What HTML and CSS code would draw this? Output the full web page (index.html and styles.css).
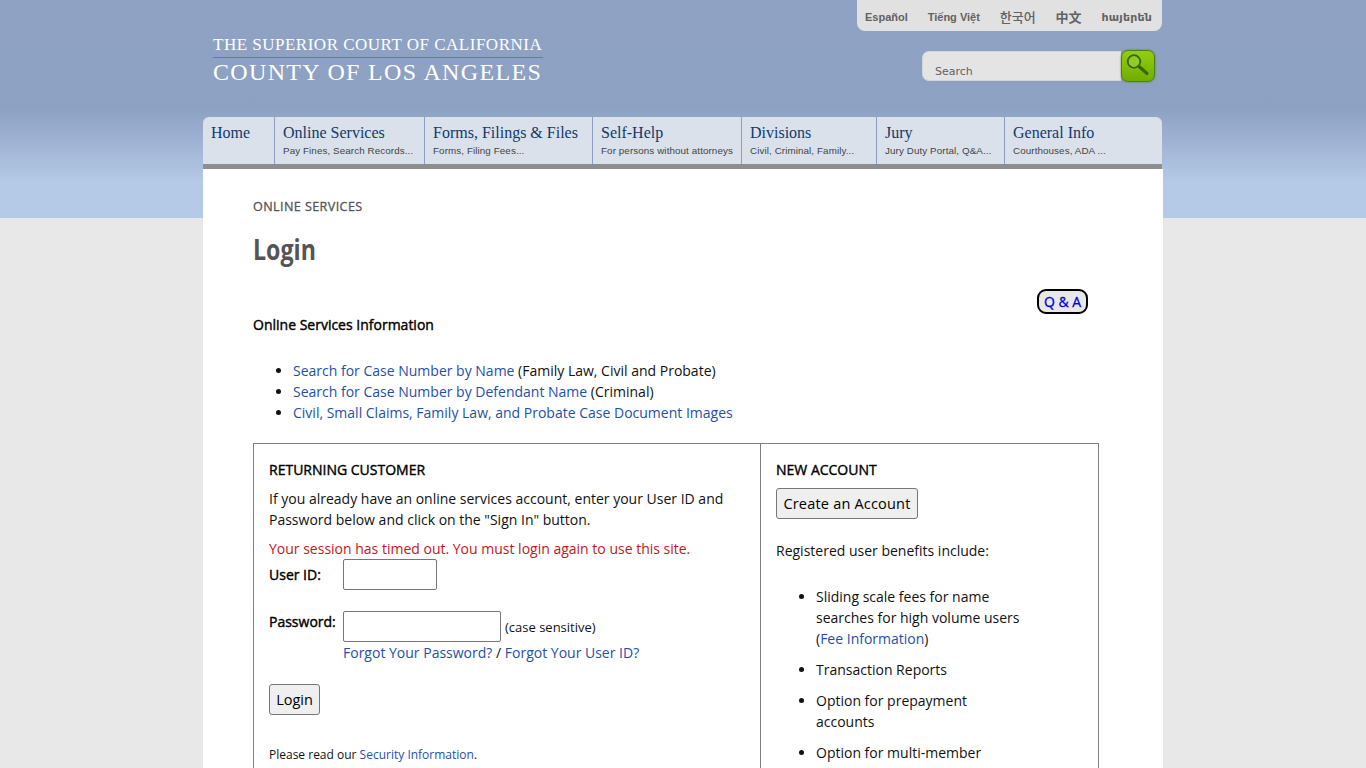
FILE: index.html
```html
<!DOCTYPE html>
<html lang="en">
<head>
  <meta charset="utf-8">
  <title>Online Services - Login</title>
  <link rel="stylesheet" href="styles.css">
</head>
<body>
  <div class="wrapper">
    <header class="header">
      <a class="logo" href="#">
        <span class="logo-top">THE SUPERIOR COURT OF CALIFORNIA</span>
        <span class="logo-bottom">COUNTY OF LOS ANGELES</span>
      </a>
      <div class="header-right">
        <div class="languages">
          <a class="lang-es" href="#">Español</a>
          <a class="lang-vi" href="#">Tiếng Việt</a>
          <a class="lang-ko" href="#">한국어</a>
          <a class="lang-zh" href="#">中文</a>
          <a class="lang-hy" href="#">հայերեն</a>
        </div>
        <form class="search">
          <input class="search-input" type="text" placeholder="Search">
          <button class="search-button" type="button" aria-label="Search">
            <svg width="34" height="32" viewBox="0 0 34 32">
              <path d="M18 16.5L26 23.5" stroke="#376500" stroke-width="3" stroke-linecap="round"/>
              <circle cx="13" cy="11.5" r="6.3" fill="#91cb27" stroke="#376500" stroke-width="1.8"/>
            </svg>
          </button>
        </form>
      </div>
    </header>

    <nav class="nav">
      <a class="nav-home" href="#"><b>Home</b></a>
      <a class="nav-online" href="#"><b>Online Services</b><span>Pay Fines, Search Records...</span></a>
      <a class="nav-forms" href="#"><b>Forms, Filings &amp; Files</b><span>Forms, Filing Fees...</span></a>
      <a class="nav-self" href="#"><b>Self-Help</b><span>For persons without attorneys</span></a>
      <a class="nav-divisions" href="#"><b>Divisions</b><span>Civil, Criminal, Family...</span></a>
      <a class="nav-jury" href="#"><b>Jury</b><span>Jury Duty Portal, Q&amp;A...</span></a>
      <a class="nav-info" href="#"><b>General Info</b><span>Courthouses, ADA ...</span></a>
    </nav>

    <main class="content">
      <div class="section-name">ONLINE SERVICES</div>
      <h1><span>Login</span></h1>
      <div class="qa"><a href="#">Q &amp; A</a></div>
      <h2 class="info-title">Online Services Information</h2>
      <ul class="links">
        <li><a href="#">Search for Case Number by Name</a> (Family Law, Civil and Probate)</li>
        <li><a href="#">Search for Case Number by Defendant Name</a> (Criminal)</li>
        <li><a href="#">Civil, Small Claims, Family Law, and Probate Case Document Images</a></li>
      </ul>

      <div class="accounts">
        <form class="returning">
          <h2>RETURNING CUSTOMER</h2>
          <p class="intro">If you already have an online services account, enter your User ID and Password below and click on the "Sign In" button.</p>
          <p class="error">Your session has timed out. You must login again to use this site.</p>
          <div class="field">
            <label for="user-id">User ID:</label>
            <input class="user-id" type="text" id="user-id">
          </div>
          <div class="field">
            <label for="password">Password:</label>
            <input class="password" type="password" id="password">
            <span class="small">(case sensitive)</span>
          </div>
          <div class="forgot"><a href="#">Forgot Your Password?</a> / <a href="#">Forgot Your User ID?</a></div>
          <button class="button login-button" type="button">Login</button>
          <p class="security">Please read our <a href="#">Security Information</a>.</p>
        </form>

        <div class="new-account">
          <h2>NEW ACCOUNT</h2>
          <button class="button create-button" type="button">Create an Account</button>
          <p class="benefits-title">Registered user benefits include:</p>
          <ul class="benefits">
            <li>Sliding scale fees for name searches for high volume users (<a href="#">Fee Information</a>)</li>
            <li>Transaction Reports</li>
            <li>Option for prepayment accounts</li>
            <li>Option for multi-member accounts</li>
          </ul>
        </div>
      </div>
    </main>
  </div>
</body>
</html>
```

FILE: styles.css
```css
* {
  box-sizing: border-box;
}

html {
  background: #e8e8e8;
}

body {
  height: 768px;
  margin: 0;
  overflow: hidden;
  background: #e8e8e8 linear-gradient(#8fa2c4 0, #8da1c3 108px, #a1b4d5 145px, #b5cae6 182px, #b5cae6 217px, #b5cae6 218px) no-repeat 0 0 / 100% 218px;
  color: #111;
  font-family: "Open Sans", sans-serif;
  font-size: 14px;
  line-height: 21px;
}

a {
  color: #1f4fa8;
  text-decoration: none;
}

h1, h2, p, ul {
  margin: 0;
}

h2, label {
  color: #000;
  font-size: 14px;
  font-weight: 400;
  -webkit-text-stroke: 0.4px #000;
}

input, button {
  font-family: "Open Sans", sans-serif;
}

.wrapper {
  width: 960px;
  margin: 0 auto;
}

/* header */
.header {
  display: flex;
  justify-content: space-between;
  height: 117px;
}

.logo {
  display: flex;
  flex-direction: column;
  width: 330px;
  margin: 34px 0 0 10px;
  color: #fff;
  font-family: "Liberation Serif", serif;
  white-space: nowrap;
}

.logo-top {
  height: 24px;
  border-bottom: 1px solid #6672c6;
  font-size: 17px;
  letter-spacing: 0.5px;
  line-height: 22px;
}

.logo-bottom {
  font-size: 24px;
  letter-spacing: 1.33px;
  line-height: 29px;
}

.header-right {
  width: 305px;
  margin-right: 1px;
}

.languages {
  display: flex;
  justify-content: space-between;
  height: 31px;
  padding: 7px 10px 0 8px;
  border-radius: 0 0 8px 8px;
  background: #e1e1e1;
  font: bold 11px/21px "Liberation Sans", "Noto Sans CJK KR", sans-serif;
}

.languages a {
  color: #626262;
}

.languages .lang-ko {
  font-family: "Noto Sans CJK KR", sans-serif;
  font-size: 13px;
  font-weight: 500;
  line-height: 19px;
}

.languages .lang-zh {
  font-family: "Noto Sans CJK SC", sans-serif;
  font-size: 13px;
  line-height: 19px;
}

.languages .lang-hy {
  font-family: "DejaVu Sans", sans-serif;
  letter-spacing: 0.2px;
}

.search {
  display: flex;
  margin: 19px 0 0 65px;
}

.search-input {
  width: 199px;
  height: 30px;
  margin-top: 1px;
  padding: 10px 12px 0;
  border: 1px solid #d3d5d9;
  border-right: 0;
  border-radius: 7px 0 0 7px;
  background: #e4e4e4;
  font: 11px "DejaVu Sans", sans-serif;
}

.search-input::placeholder {
  color: #626262;
}

.search-button {
  width: 34px;
  height: 32px;
  padding: 0;
  border: 1px solid #4a850b;
  border-radius: 7px;
  background: linear-gradient(#94cd13, #70ad00);
  box-shadow: 0 0 2px #557733;
}

.search-button svg {
  display: block;
  margin: -1px;
  fill: none;
}

/* navigation */
.nav {
  display: flex;
  width: 959px;
  height: 52px;
  border-bottom: 5px solid #8e8e8e;
  border-radius: 6px 6px 0 0;
  background: #dae1eb;
}

.nav a {
  padding: 6px 0 0 8px;
  border-right: 1px solid #8b9fc0;
  white-space: nowrap;
}

.nav b {
  display: block;
  color: #13386b;
  font: 16px/20px "Liberation Serif", serif;
}

.nav span {
  display: block;
  color: #444;
  font: 9.8px/15px "Liberation Sans", sans-serif;
  letter-spacing: 0.1px;
}

.nav .nav-home { width: 72px; }
.nav .nav-online { width: 150px; }
.nav .nav-forms { width: 168px; }
.nav .nav-self { width: 149px; }
.nav .nav-divisions { width: 135px; }
.nav .nav-jury { width: 128px; }
.nav .nav-info { flex: 1; border: 0; }

/* content */
.content {
  padding: 27px 64px 0 50px;
  background: #fff;
}

.section-name {
  color: #555;
  font-size: 12.6px;
  letter-spacing: 0.4px;
  -webkit-text-stroke: 0.3px #555;
}

h1 {
  height: 40px;
  margin-top: 12px;
  color: #555;
  font-size: 29px;
  line-height: 40px;
}

h1 span {
  display: inline-block;
  transform: scaleX(0.8);
  transform-origin: left;
}

.qa {
  display: flex;
  justify-content: flex-end;
  padding: 20px 11px 0 0;
}

.qa a {
  width: 51px;
  height: 25px;
  border: 2px solid #000;
  border-radius: 9px;
  background: #e8e8e8;
  color: #00d;
  text-align: center;
  -webkit-text-stroke: 0.3px #00d;
}

.links {
  margin: 25px 0 20px;
  padding-left: 40px;
}

.accounts {
  display: flex;
  width: 846px;
  border: 1px solid #808080;
}

.returning {
  width: 507px;
  padding: 15px 15px 20px;
  border-right: 1px solid #808080;
}

.intro {
  width: 470px;
  margin: 8px 0;
}

.error {
  color: #c4161c;
}

.field {
  display: flex;
  height: 52px;
}

.field label {
  width: 74px;
  padding-top: 5px;
}

.field + .field {
  height: 31px;
}

.field + .field label {
  padding-top: 0;
}

.user-id, .password {
  height: 31px;
  border: 1px solid #767676;
  border-radius: 2px;
}

.user-id {
  width: 94px;
}

.password {
  width: 158px;
}

.small {
  padding: 6px 0 0 4px;
  font-size: 13px;
}

.forgot {
  padding-left: 74px;
}

.button {
  display: block;
  height: 31px;
  padding: 0;
  border: 1px solid #767676;
  border-radius: 3px;
  background: #efefef;
  color: #000;
  font-size: 14.5px;
}

.login-button {
  width: 51px;
  margin-top: 21px;
}

.security {
  margin-top: 29px;
  font-size: 12px;
}

.new-account {
  flex: 1;
  padding: 15px 15px 20px;
}

.create-button {
  width: 142px;
  margin-top: 8px;
  letter-spacing: 0.2px;
}

.benefits-title {
  margin: 21px 0 25px;
}

.benefits {
  width: 248px;
  padding-left: 40px;
}

.benefits li {
  margin-bottom: 10px;
}
```
